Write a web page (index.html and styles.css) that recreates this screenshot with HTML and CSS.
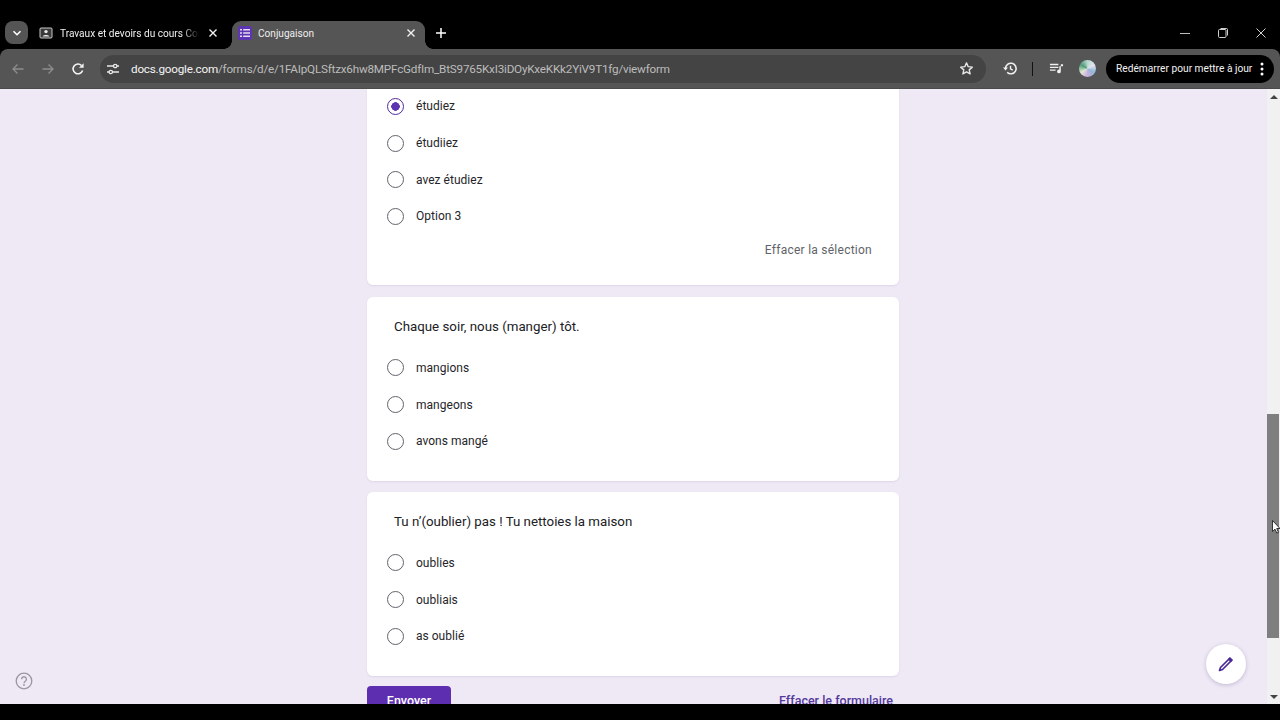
FILE: index.html
```html
<!DOCTYPE html>
<html lang="fr">
<head>
<meta charset="utf-8">
<title>Conjugaison</title>
<link rel="stylesheet" href="styles.css">
</head>
<body>
<div class="browser">
  <header class="tabstrip">
    <div class="tab-search"><svg width="12" height="12" viewBox="0 0 12 12"><path d="M2.500 4.200 6 7.700l3.500-3.500" fill="none" stroke="#fff" stroke-width="1.600"/></svg></div>
    <div class="tab inactive">
      <svg class="fav" width="14" height="14" viewBox="0 0 14 14"><rect x="1" y="2" width="12" height="10" fill="#3a3a3a"/><circle cx="7" cy="5.600" r="1.700" fill="#e8e8e8"/><path d="M3.600 10.500c.4-2 6.400-2 6.800 0z" fill="#e8e8e8"/><rect x="1" y="2" width="12" height="10" rx="1" fill="none" stroke="#c9c9c9" stroke-width="1"/></svg>
      <span class="tab-title fade">Travaux et devoirs du cours Conjugaison</span>
      <svg class="close" width="10" height="10" viewBox="0 0 10 10"><path d="M1.500 1.500l7 7m0-7-7 7" stroke="#f2f2f2" stroke-width="1.400"/></svg>
    </div>
    <div class="tab active">
      <span class="forms-fav"><svg width="10" height="10" viewBox="0 0 10 10"><path d="M0 1h2v1.600H0zM3.200 1H10v1.600H3.200zM0 4.200h2v1.600H0zM3.200 4.200H10v1.600H3.200zM0 7.400h2V9H0zM3.200 7.400H10V9H3.200z" fill="#e6dcf5"/></svg></span>
      <span class="tab-title">Conjugaison</span>
      <svg class="close" width="10" height="10" viewBox="0 0 10 10"><path d="M1.500 1.500l7 7m0-7-7 7" stroke="#f2f2f2" stroke-width="1.400"/></svg>
    </div>
    <svg class="new-tab" width="12" height="12" viewBox="0 0 12 12"><path d="M6 1v10M1 6h10" stroke="#fff" stroke-width="1.500"/></svg>
    <div class="win-controls">
      <svg width="10" height="10" viewBox="0 0 10 10"><path d="M0 5.500h10" stroke="#bdbdbd"/></svg>
      <svg width="10" height="10" viewBox="0 0 10 10"><rect x=".5" y="1.500" width="7.500" height="8" rx="1" fill="none" stroke="#d0d0d0"/><path d="M2.500 .5h6a1 1 0 0 1 1 1v6" fill="none" stroke="#d0d0d0"/></svg>
      <svg width="10" height="10" viewBox="0 0 10 10"><path d="M.5.500l9 9m0-9-9 9" stroke="#d0d0d0"/></svg>
    </div>
  </header>

  <nav class="toolbar">
    <svg class="nav-ico" width="14" height="14" viewBox="0 0 14 14"><path d="M12.500 7H2M6.500 2.500 2 7l4.500 4.500" fill="none" stroke="#8d8d8d" stroke-width="1.300"/></svg>
    <svg class="nav-ico" width="14" height="14" viewBox="0 0 14 14"><path d="M1.500 7H12M7.500 2.500 12 7l-4.500 4.500" fill="none" stroke="#8d8d8d" stroke-width="1.300"/></svg>
    <svg class="nav-ico" width="14" height="14" viewBox="0 0 14 14"><path d="M11.600 8.500A4.900 4.900 0 1 1 10.500 3.500" fill="none" stroke="#f4f4f4" stroke-width="1.600"/><path d="M12.600 1.200v4.600H8z" fill="#f4f4f4"/></svg>
    <div class="omnibox">
      <span class="site-ico"><svg width="14" height="14" viewBox="0 0 14 14"><path d="M1 4h6.500M11 4h2M1 10h2M6.500 10H13" stroke="#e8e8e8" stroke-width="1.300"/><circle cx="9.200" cy="4" r="1.700" fill="none" stroke="#e8e8e8" stroke-width="1.300"/><circle cx="4.800" cy="10" r="1.700" fill="none" stroke="#e8e8e8" stroke-width="1.300"/></svg></span>
      <span class="url"><b>docs.google.com</b>/forms/d/e/1FAIpQLSftzx6hw8MPFcGdfIm_BtS9765KxI3iDOyKxeKKk2YiV9T1fg/viewform</span>
      <svg class="star" width="15" height="15" viewBox="0 0 24 24"><path d="M12 3l2.700 6.100 6.600.7-5 4.400 1.500 6.500L12 17.300l-5.800 3.400 1.500-6.500-5-4.400 6.600-.7z" fill="none" stroke="#e8e8e8" stroke-width="2.200" stroke-linejoin="round"/></svg>
    </div>
    <svg class="tool-ico history" width="15" height="15" viewBox="0 0 24 24"><path d="M4 12a8.500 8.500 0 1 1 2.700 6.200" fill="none" stroke="#f0f0f0" stroke-width="2.500"/><path d="M0 10.500h8L4 15z" fill="#f0f0f0"/><path d="M12 7.500V12.500l3.500 2.200" fill="none" stroke="#f0f0f0" stroke-width="2.200"/></svg>
    <span class="divider"></span>
    <svg class="tool-ico media" width="15" height="15" viewBox="0 0 16 16"><path d="M1 3h9v1.400H1zM1 6h9v1.400H1zM1 9h6v1.400H1z" fill="#f0f0f0"/><path d="M11 5.500h4V3.500h-2.400v7.700a2 2 0 1 1-1.600-2z" fill="#f0f0f0"/></svg>
    <span class="avatar"></span>
    <div class="restart"><span>Redémarrer pour mettre à jour</span><svg width="4" height="14" viewBox="0 0 4 14"><circle cx="2" cy="2" r="1.500" fill="#fff"/><circle cx="2" cy="7" r="1.500" fill="#fff"/><circle cx="2" cy="12" r="1.500" fill="#fff"/></svg></div>
  </nav>

  <div class="viewport">
    <main class="page">
      <section class="card card-first">
        <div class="options">
          <div class="option"><span class="radio checked"></span><span>étudiez</span></div>
          <div class="option"><span class="radio"></span><span>étudiiez</span></div>
          <div class="option"><span class="radio"></span><span>avez étudiez</span></div>
          <div class="option"><span class="radio"></span><span>Option 3</span></div>
        </div>
        <div class="clear-row"><span>Effacer la sélection</span></div>
      </section>
      <section class="card">
        <h2 class="question">Chaque soir, nous (manger) tôt.</h2>
        <div class="options">
          <div class="option"><span class="radio"></span><span>mangions</span></div>
          <div class="option"><span class="radio"></span><span>mangeons</span></div>
          <div class="option"><span class="radio"></span><span>avons mangé</span></div>
        </div>
      </section>
      <section class="card card-last">
        <h2 class="question">Tu n’(oublier) pas ! Tu nettoies la maison</h2>
        <div class="options">
          <div class="option"><span class="radio"></span><span>oublies</span></div>
          <div class="option"><span class="radio"></span><span>oubliais</span></div>
          <div class="option"><span class="radio"></span><span>as oublié</span></div>
        </div>
      </section>
      <div class="actions">
        <button class="submit">Envoyer</button>
        <span class="reset">Effacer le formulaire</span>
      </div>
    </main>
    <div class="help"><svg width="18" height="18" viewBox="0 0 18 18"><circle cx="9" cy="9" r="7.800" fill="none" stroke="#9a97a0" stroke-width="1.300"/><path d="M6.600 7.200a2.400 2.400 0 1 1 3.700 2c-.9.600-1.300 1-1.300 2" fill="none" stroke="#9a97a0" stroke-width="1.300"/><circle cx="9" cy="13" r=".9" fill="#9a97a0"/></svg></div>
    <div class="fab"><svg width="16" height="16" viewBox="0 0 16 16"><path d="M11.500 2.500l2 2-9 9-3 1 1-3z" fill="none" stroke="#4a2a96" stroke-width="1.700" stroke-linejoin="round"/><path d="M12 .9l3.100 3.100-2.300 2.300-3.100-3.100z" fill="#4a2a96"/></svg></div>
    <aside class="scrollbar">
      <span class="arrow up"></span>
      <span class="thumb"></span>
      <span class="arrow down"></span>
    </aside>
    <svg class="cursor" width="8" height="14" viewBox="0 0 8 14"><path d="M.5.500v11l2.500-2.400 1.800 4 1.700-.8-1.800-3.800H8z" fill="#fff" stroke="#111" stroke-width=".8"/></svg>
  </div>
  <div class="bottom-bar"></div>
</div>
</body>
</html>
```
FILE: styles.css
```css
* { box-sizing: border-box; }
html, body { margin: 0; height: 100%; background: #000; overflow: hidden; }
body { font-family: Roboto, "Liberation Sans", sans-serif; color: #202124; }

.browser { width: 1280px; height: 720px; display: flex; flex-direction: column; overflow: hidden; }

/* Tab strip */
.tabstrip { height: 49px; flex: none; background: #000; display: flex; align-items: flex-end; padding-left: 5px; color: #efefef; font-size: 10.1px; }
.tab-search { width: 23px; height: 23px; margin-bottom: 5px; border-radius: 8px; background: #555; display: flex; align-items: center; justify-content: center; }
.tab { width: 193px; height: 28px; display: flex; align-items: center; position: relative; padding: 0 9px 4px 6px; }
.tab.inactive { width: 204px; padding-right: 14px; }
.tab .fav { flex: none; margin: 0 7px 0 5px; }
.tab-title { flex: 1; min-width: 0; white-space: nowrap; overflow: hidden; }
.tab-title.fade { -webkit-mask-image: linear-gradient(90deg, #000 88%, transparent 100%); mask-image: linear-gradient(90deg, #000 88%, transparent 100%); }
.close { flex: none; margin-left: 9px; }
.tab.active { background: #555; border-radius: 9px 9px 0 0; }
.tab.active::before, .tab.active::after { content: ""; position: absolute; bottom: 0; width: 8px; height: 8px; background: radial-gradient(circle at 0 0, transparent 7.5px, #555 8px); }
.tab.active::before { left: -8px; }
.tab.active::after { right: -8px; background: radial-gradient(circle at 100% 0, transparent 7.5px, #555 8px); }
.forms-fav { flex: none; width: 14px; height: 14px; margin-right: 6px; border-radius: 2px; background: #5e35b1; display: flex; align-items: center; justify-content: center; }
.new-tab { flex: none; margin: 0 0 10px 10px; }
.win-controls { margin-left: auto; height: 49px; padding: 17px 14px 0 0; display: flex; align-items: center; gap: 28px; }

/* Toolbar */
.toolbar { height: 40px; flex: none; background: #555; border-radius: 8px 8px 0 0; display: flex; align-items: center; padding: 0 6px 0 11px; color: #eee; border-bottom: 1px solid #4a4a4a; }
.nav-ico { flex: none; margin-right: 16px; }
.omnibox { flex: none; width: 886px; height: 28px; margin-left: -1px; border-radius: 14px; background: #444; display: flex; align-items: center; padding-right: 12px; }
.site-ico { flex: none; width: 22px; height: 22px; margin-left: 2px; display: flex; align-items: center; justify-content: center; }
.url { flex: 1; margin-left: 7px; font-size: 11.7px; letter-spacing: -.21px; color: #bcbcbc; white-space: nowrap; }
.url b { font-weight: 400; color: #f4f4f4; }
.star { flex: none; }
.tool-ico { flex: none; }
.history { margin-left: 17px; }
.divider { width: 1px; height: 14px; background: #111; margin: 0 16px 0 14px; flex: none; }
.avatar { flex: none; width: 17px; height: 17px; margin-left: 15px; border-radius: 50%; background: conic-gradient(#b8d8cf, #e4e4ee, #8fb7d8, #c8b0e0, #dce9d0, #4f9a78, #b8d8cf); }
.restart { flex: none; width: 168px; height: 28px; margin-left: 10px; background: #000; border-radius: 14px; display: flex; align-items: center; justify-content: space-between; padding: 0 10px; font-size: 10.2px; color: #f2f2f2; white-space: nowrap; }

/* Page */
.viewport { height: 615px; flex: none; display: flex; position: relative; overflow: hidden; background: #efe9f6; }
.page { flex: 1; min-width: 0; padding-left: 367px; }
.card { display: flow-root; width: 532px; height: 183.5px; margin-bottom: 11.5px; background: #fff; border-radius: 6px; box-shadow: 0 1px 2px rgba(70, 50, 110, .1); }
.card-first { height: 196px; margin-bottom: 12px; border-radius: 0 0 6px 6px; }
.card-first .options { margin-top: -1px; }
.card-last { margin-bottom: 10.5px; }
.question { margin: 0; padding: 21px 0 0 27px; height: 52.5px; font-size: 13.3px; font-weight: 400; line-height: 18px; color: #202124; }
.options { display: flex; flex-direction: column; }
.option { height: 36.7px; display: flex; align-items: center; padding-left: 20px; gap: 12px; font-size: 12px; letter-spacing: .02px; color: #26262a; }
.radio { width: 17px; height: 17px; flex: none; border-radius: 50%; border: 1.5px solid #5f6368; }
.radio.checked { border-color: #4f2a9c; background: radial-gradient(circle, #5e35b1 0 4px, #fff 4.5px); }
.clear-row { display: flex; justify-content: flex-end; padding: 5.5px 27px 0 0; font-size: 12px; letter-spacing: .25px; line-height: 20px; color: #5f6368; }
.actions { display: flex; align-items: flex-start; justify-content: space-between; width: 526px; }
.submit { width: 84px; height: 28px; border: 0; border-radius: 4px; background: #5e2eb0; color: #fff; font: 500 12.5px Roboto, sans-serif; }
.reset { padding-top: 7px; font-size: 12.5px; font-weight: 500; color: #553a9e; }

/* Overlays */
.help { position: absolute; left: 15px; bottom: 14px; height: 18px; }
.fab { position: absolute; left: 1206px; top: 555px; width: 40px; height: 40px; border-radius: 50%; background: #fff; box-shadow: 0 1px 4px rgba(60, 40, 100, .25); display: flex; align-items: center; justify-content: center; }
.cursor { position: absolute; left: 1272px; top: 431px; }

/* Scrollbar */
.scrollbar { flex: none; width: 13px; background: #f1f1f1; display: flex; flex-direction: column; align-items: center; position: relative; }
.thumb { position: absolute; left: 0; top: 325px; width: 12px; height: 224px; background: #7f7f7f; }
.arrow { position: absolute; left: 3px; width: 0; height: 0; border: 4px solid transparent; }
.arrow.up { top: 2px; border-bottom-color: #444; }
.arrow.down { bottom: 1px; border-top-color: #444; }

.bottom-bar { flex: 1; background: #000; }
```
